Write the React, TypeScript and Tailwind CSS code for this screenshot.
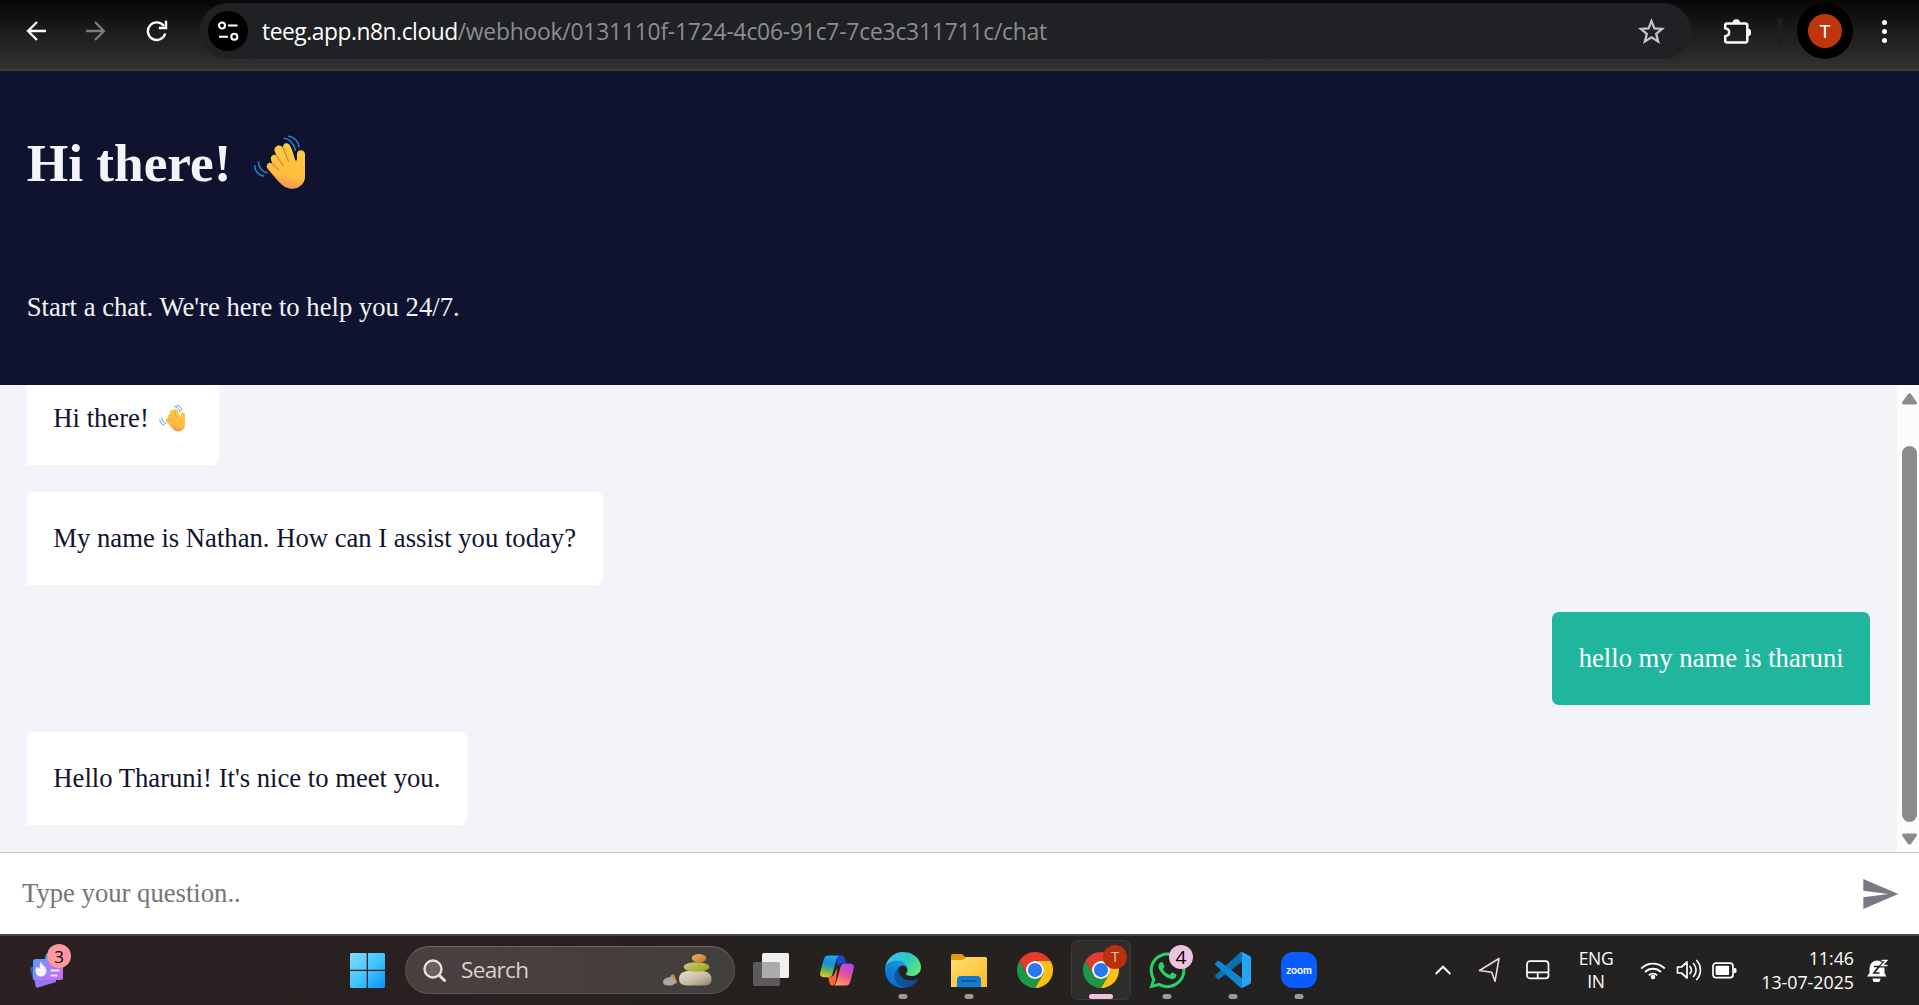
import React from "react";
import { FaWhatsapp } from "react-icons/fa";

const serif = "font-['Liberation_Serif',serif]";
const sans = "font-['Open_Sans','Noto_Sans',sans-serif]";

function WaveHand({ className }: { className: string }) {
  return (
    <svg viewBox="20 18 164 168" className={className} fill="none">
      <defs>
        <linearGradient id="skin" x1="0.6" y1="0" x2="0.4" y2="1">
          <stop offset="0" stopColor="#ffcc47" />
          <stop offset="0.7" stopColor="#ffbc3e" />
          <stop offset="1" stopColor="#f08f56" />
        </linearGradient>
      </defs>
      <g stroke="#1d84cf" strokeWidth="4.5" strokeLinecap="round">
        <path d="M114 31q18 4 27 20q5 8 6 16" />
        <path d="M127 25q14 2 22 12q8 9 9 20" />
        <path d="M36 101q1 16 11 25q7 7 16 8" />
        <path d="M25 113q0 13 8 21q7 8 19 10" />
      </g>
      <path
        d="M62 110C65 103 72 102 78 107L74 96C71 84 81 76 90 82L85 70C82 58 94 48 106 55L111 60C108 48 119 42 128 49C134 55 142 78 146 96L151 98C154 91 149 77 155 70C162 64 174 67 176 77V146C176 168 155 185 132 182C116 180 106 171 96 160L67 126C61 118 60 116 62 110Z"
        fill="url(#skin)"
      />
      <g stroke="#dc8a1f" strokeWidth="3.5" strokeLinecap="round">
        <path d="M78 107L96 124" />
        <path d="M90 82L110 112" />
        <path d="M111 60L127 101" />
        <path d="M146 97Q150 101 152 97" />
      </g>
    </svg>
  );
}

function BrowserBar() {
  return (
    <div className="flex h-[71px] shrink-0 items-start border-b-2 border-[#3b3b38] bg-linear-to-b from-[#070707] via-[#1c1c1c] via-45% to-[#313131] pt-[3px]">
      <div className="flex h-14 w-[200px] shrink-0 items-center gap-10 pl-[26px]">
        <svg className="size-5" viewBox="0 0 20 20" fill="none" stroke="#fff" strokeWidth="2.3">
          <path d="M20 10H1.5M11 1L2 10l9 9" />
        </svg>
        <svg className="size-5" viewBox="0 0 20 20" fill="none" stroke="#7b7b7b" strokeWidth="2.3">
          <path d="M0 10h18.5M9 1l9 9-9 9" />
        </svg>
        <svg className="size-[22px]" viewBox="0 0 22 22" fill="none" stroke="#fff" strokeWidth="2.4">
          <path d="M19.2 13.5A8.8 8.8 0 1 1 18 6.2" />
          <path d="M20 .8V8h-7.2" />
        </svg>
      </div>
      <div className="flex h-14 w-[1491px] items-center rounded-full bg-[#202124] pl-2">
        <div className="flex size-10 items-center justify-center rounded-full bg-black">
          <svg className="size-[22px]" viewBox="0 0 22 22" fill="none" stroke="#fff" strokeWidth="2.1">
            <circle cx="5" cy="5.5" r="3" />
            <path d="M11 5.5h9.5M2 16.8h9" />
            <circle cx="17.3" cy="16.8" r="3" />
          </svg>
        </div>
        <div className={`${sans} mt-[2px] ml-[14px] flex-1 whitespace-nowrap text-[22.8px] leading-8 text-[#8b8d90]`}>
          <span className="tracking-[-0.46px] text-white">teeg.app.n8n.cloud</span>
          <span className="tracking-[-0.19px]">/webhook/0131110f-1724-4c06-91c7-7ce3c311711c/chat</span>
        </div>
        <svg className="mr-[26px] size-[27px]" viewBox="0 0 26 26" fill="none" stroke="#c4c5c6" strokeWidth="2.2">
          <path d="M13 3l2.8 7 7.4.5-5.7 4.8 1.9 7.3L13 18.600l-6.400 4 1.900-7.300L2.800 10.500l7.400-.5z" />
        </svg>
      </div>
      <div className="flex h-14 flex-1 items-center">
        <svg className="ml-[32px] size-7" viewBox="0 0 28 28">
          <path
            d="M4 6.500H22.500A1.800 1.800 0 0 1 24.300 8.300V23.700A1.800 1.800 0 0 1 22.500 25.500H4A1.800 1.800 0 0 1 2.200 23.700V19.300Q6.200 18.500 6.200 15.200T2.200 11.200V8.300A1.800 1.800 0 0 1 4 6.500Z"
            fill="none"
            stroke="#fff"
            strokeWidth="2.5"
          />
          <path d="M9.500 6a3.800 3.800 0 0 1 7.600 0zM24.500 11.500a3.800 3.800 0 0 1 0 7.600z" fill="#fff" />
        </svg>
        <div className="ml-[27px] h-[27px] w-1 rounded bg-[#1d1d1d]" />
        <div className="ml-[15px] flex size-14 items-center justify-center rounded-full bg-black">
          <div className="flex size-[34px] items-center justify-center rounded-full bg-[#bf360c] font-['Roboto',sans-serif] text-[19px] leading-none text-white">
            T
          </div>
        </div>
        <div className="ml-[29px] flex flex-col gap-1">
          <i className="size-[5px] rounded-full bg-white" />
          <i className="size-[5px] rounded-full bg-white" />
          <i className="size-[5px] rounded-full bg-white" />
        </div>
      </div>
    </div>
  );
}

function Bubble({ children, user }: { children: React.ReactNode; user?: boolean }) {
  return (
    <div
      className={
        user
          ? "flex h-[93.330px] shrink-0 items-center self-end rounded-[6.670px] rounded-br-none bg-[#20b69e] px-[26.670px] pb-[2px] text-white"
          : "flex h-[93.330px] shrink-0 items-center self-start rounded-[6.670px] rounded-bl-none bg-white px-[26.670px] pb-[2px] text-[#101330]"
      }
    >
      {children}
    </div>
  );
}

function Chrome() {
  return (
    <svg className="size-9" viewBox="0 0 48 48">
      <path d="M24 12H44.780A24 24 0 0 0 3.220 12L13.610 30A12 12 0 0 1 24 12Z" fill="#e33b2e" />
      <path d="M34.390 30L24 48A24 24 0 0 0 44.780 12H24A12 12 0 0 1 34.390 30Z" fill="#fdc00f" />
      <path d="M13.610 30L3.220 12A24 24 0 0 0 24 48L34.390 30A12 12 0 0 1 13.610 30Z" fill="#1f9547" />
      <circle cx="24" cy="24" r="12" fill="#fff" />
      <circle cx="24" cy="24" r="9.500" fill="#2a78ea" />
    </svg>
  );
}

function Edge() {
  return (
    <svg className="size-9" viewBox="0 0 256 256">
      <defs>
        <linearGradient id="e1" x1="0" y1="0" x2="1" y2="0">
          <stop offset="0" stopColor="#0c59a4" />
          <stop offset="1" stopColor="#114a8b" />
        </linearGradient>
        <linearGradient id="e2" x1="0.600" y1="0" x2="0.300" y2="1">
          <stop offset="0" stopColor="#1b9de2" />
          <stop offset="0.400" stopColor="#1182d6" />
          <stop offset="1" stopColor="#0a6ac6" />
        </linearGradient>
        <linearGradient id="e3" x1="0" y1="0.200" x2="1" y2="0.800">
          <stop offset="0" stopColor="#35c1f1" />
          <stop offset="0.500" stopColor="#2fc6c5" />
          <stop offset="1" stopColor="#66eb6e" />
        </linearGradient>
      </defs>
      <path fill="url(#e1)" d="M231 190.500c-3.400 1.800-6.900 3.400-10.500 4.700a101.100 101.100 0 0 1-35.900 6.400c-47.300 0-88.500-32.500-88.500-74.300a31.500 31.500 0 0 1 16.400-27.300c-42.800 1.800-53.800 46.400-53.800 72.500 0 74 68.100 81.400 82.800 81.400 7.900 0 19.800-2.300 27-4.600l1.300-.4a128.300 128.300 0 0 0 66.600-52.800 4 4 0 0 0-5.400-5.600z" />
      <path fill="url(#e2)" d="M105.700 241.400a79.200 79.200 0 0 1-22.700-21.300 80.700 80.700 0 0 1 29.500-120c3.200-1.500 8.500-4.100 15.600-4a32.400 32.400 0 0 1 25.700 13 31.900 31.900 0 0 1 6.300 18.700c0-.2 24.500-79.600-80-79.600-43.900 0-80 41.600-80 78.200a130.200 130.200 0 0 0 12.100 56 128 128 0 0 0 156.400 67 75.500 75.500 0 0 1-62.800-8z" />
      <path fill="url(#e3)" d="M152.300 148.900c-.9 1-3.400 2.500-3.400 5.600 0 2.600 1.700 5.200 4.800 7.300 14.300 10 41.400 8.600 41.500 8.600a59.600 59.600 0 0 0 30.300-8.300 61.400 61.400 0 0 0 30.400-52.900c.3-22.400-8-37.300-11.300-43.900C223.500 23.900 177.700 0 128 0A128 128 0 0 0 0 126.200c.5-36.500 36.800-66 80-66 3.500 0 23.500.3 42 10 16.300 8.600 24.900 18.900 30.800 29.200 6.200 10.700 7.300 24.100 7.300 29.500 0 5.300-2.700 13.300-7.800 19.900z" />
    </svg>
  );
}

function Copilot() {
  return (
    <svg className="h-[31px] w-[34px]" viewBox="0 0 34 31">
      <defs>
        <linearGradient id="c1" x1="0.500" y1="0" x2="0.300" y2="1">
          <stop offset="0" stopColor="#22a7ee" />
          <stop offset="0.350" stopColor="#128fdc" />
          <stop offset="0.700" stopColor="#62b45c" />
          <stop offset="1" stopColor="#f4c70c" />
        </linearGradient>
        <linearGradient id="c2" x1="0.700" y1="0" x2="0.300" y2="1">
          <stop offset="0" stopColor="#a24df0" />
          <stop offset="0.500" stopColor="#ee5090" />
          <stop offset="1" stopColor="#ffa253" />
        </linearGradient>
      </defs>
      <path d="M16 .5h5c2.500 0 3.500 1.500 4.200 4l1 4h-3c-3 0-4.500 1.500-5.200 3.500z" fill="#1b48d0" />
      <path d="M8.500 22c4 0 5-1 6-3.500l3-6-1.500 12.500c-.5 3-1.500 5.500-3.500 5.500-2 0-3-2-3.500-4.500z" fill="#f9643c" />
      <path d="M8 .5h12c-2 0-3 2-3.700 4.500L12.500 19c-.8 2.300-2 3.300-4.500 3.300H4c-3 0-4.500-2-3.700-5L3.500 5C4.500 2 5.500.5 8 .5z" fill="url(#c1)" />
      <path d="M26 30.500H13c2 0 3-2 3.700-4.500L20.500 12c.8-2.300 2-3.600 4.500-3.600h5c3 0 4.500 2 3.700 5L30.500 26c-1 3-2 4.500-4.500 4.500z" fill="url(#c2)" />
    </svg>
  );
}

function Folder() {
  return (
    <svg className="size-9" viewBox="0 0 36 36">
      <defs>
        <linearGradient id="f1" x1="0" y1="0" x2="1" y2="1">
          <stop offset="0" stopColor="#ffdc75" />
          <stop offset="1" stopColor="#fbbd20" />
        </linearGradient>
        <linearGradient id="f2" x1="0" y1="0" x2="0" y2="1">
          <stop offset="0" stopColor="#0b78cf" />
          <stop offset="1" stopColor="#1181d8" />
        </linearGradient>
      </defs>
      <path d="M0 3.500A1.500 1.500 0 0 1 1.500 2H11l4 3.500V10H0z" fill="#dd9b07" />
      <path d="M0 8h11.500l4-3h19A1.500 1.500 0 0 1 36 6.500V35H0z" fill="url(#f1)" />
      <path d="M6 35v-7a4 4 0 0 1 4-4h16a4 4 0 0 1 4 4v7z" fill="url(#f2)" />
      <path d="M11 29h14" stroke="#07559c" strokeWidth="2" strokeLinecap="round" />
    </svg>
  );
}

function VSCode() {
  return (
    <svg className="size-9" viewBox="0 0 100 100">
      <path fill="#0a6fb4" d="M96.461 10.796L75.857.876a6.230 6.230 0 0 0-7.107 1.207L1.299 63.583a4.167 4.167 0 0 0 .004 6.162l5.510 5.009a4.167 4.167 0 0 0 5.320.236l81.228-61.620c2.725-2.067 6.639-.124 6.639 3.297v-.24a6.250 6.250 0 0 0-3.539-5.630z" />
      <path fill="#0e86d0" d="M96.461 89.204l-20.604 9.920a6.229 6.229 0 0 1-7.107-1.207L1.299 36.417a4.167 4.167 0 0 1 .004-6.162l5.510-5.009a4.167 4.167 0 0 1 5.320-.236l81.228 61.620c2.725 2.067 6.639.124 6.639-3.297v.24a6.250 6.250 0 0 1-3.539 5.630z" />
      <path fill="#27a5f2" d="M75.858 99.126a6.232 6.232 0 0 1-7.108-1.210c2.306 2.307 6.250.674 6.250-2.588V4.672c0-3.262-3.944-4.895-6.250-2.589a6.232 6.232 0 0 1 7.108-1.210l20.600 9.908A6.250 6.250 0 0 1 100 16.413v67.174a6.250 6.250 0 0 1-3.541 5.633z" />
    </svg>
  );
}

function Badge({ children, className }: { children: string; className: string }) {
  return (
    <span className={`absolute flex size-6 items-center justify-center rounded-full leading-none ${className}`}>{children}</span>
  );
}

function Slot({ children, state }: { children: React.ReactNode; state?: "open" | "active" }) {
  return (
    <div
      className={
        state === "active"
          ? "relative mx-[3px] mt-[4px] flex h-[60px] w-[60px] shrink-0 justify-center rounded-[7px] border border-[#3d3b3a] bg-[#2f2d2c] pt-[11px]"
          : "relative mt-[4px] flex h-[60px] w-[66px] shrink-0 justify-center pt-[12px]"
      }
    >
      {children}
      {state === "open" && <i className="absolute bottom-px left-1/2 h-[5px] w-[9px] -translate-x-1/2 rounded-full bg-[#999]" />}
      {state === "active" && <i className="absolute bottom-0 left-1/2 h-[5px] w-6 -translate-x-1/2 rounded-full bg-[#eec1e1]" />}
    </div>
  );
}

function Widgets() {
  return (
    <svg className="h-9 w-[34px]" viewBox="0 0 34 36">
      <defs>
        <linearGradient id="w1" x1="0" y1="0" x2="1" y2="0.600">
          <stop offset="0" stopColor="#4e9bff" />
          <stop offset="0.500" stopColor="#9b83fb" />
          <stop offset="1" stopColor="#c070f5" />
        </linearGradient>
      </defs>
      <path d="M14 10l2-8h6l6 10z" fill="#12b4d8" />
      <path d="M0 16l4-2 3 14H3z" fill="#1b6cc0" />
      <path d="M4 26h22v4L8 35.500a2 2 0 0 1-2.500-1.500z" fill="#9277f2" />
      <rect x="3" y="7" width="30" height="21" rx="2.500" fill="url(#w1)" />
      <path d="M11 9.500c0 3 5.500 5 5.500 9.500a5.500 5.500 0 0 1-11 0c0-2 .5-3.500 2-4.500 0 1.500.5 2 1.500 2 1.500-1.500 0-4.500 2-7z" fill="#f6f2fb" />
      <path d="M20.500 18.500h9M20.500 23.500h7" stroke="#f0e4ff" strokeWidth="2" />
    </svg>
  );
}

function Stones() {
  return (
    <svg className="h-8 w-[49px]" viewBox="0 0 49 32">
      <defs>
        <linearGradient id="s1" x1="0" y1="0" x2="1" y2="1">
          <stop offset="0" stopColor="#ebe3d3" />
          <stop offset="0.600" stopColor="#c1b69f" />
          <stop offset="1" stopColor="#8f8264" />
        </linearGradient>
        <linearGradient id="s2" x1="0" y1="0" x2="1" y2="0.700">
          <stop offset="0" stopColor="#cfca86" />
          <stop offset="1" stopColor="#a0a513" />
        </linearGradient>
        <linearGradient id="s3" x1="0" y1="0" x2="1" y2="1">
          <stop offset="0" stopColor="#f0b36b" />
          <stop offset="1" stopColor="#bf761f" />
        </linearGradient>
      </defs>
      <path d="M6 24l2-2.500q2-2.500 3.500 0L14 28q0 2-2 2z" fill="#cf8f3f" />
      <path d="M0 28q0-3 5-4.500 4-1 6 1.500t0 5q-1 1.500-5 1.500-6 0-6-3.500z" fill="#a6a7aa" />
      <path d="M16 25q0-7 8-8h17q7 1 7.500 8 0 6.500-6 6.500H24q-8 0-8-6.500z" fill="url(#s1)" />
      <ellipse cx="33.500" cy="13" rx="12.800" ry="4.800" fill="url(#s2)" />
      <ellipse cx="36" cy="4.300" rx="7.200" ry="4.200" fill="url(#s3)" />
    </svg>
  );
}

function Taskbar() {
  return (
    <div className={`${sans} flex h-[71px] shrink-0 items-start border-t-2 border-[#464444] bg-linear-to-r from-[#2c2022] via-[#24211f] via-45% to-[#232221]`}>
      <div className="relative mt-[16px] ml-[30px] w-[320px]">
        <Widgets />
        <Badge className="-top-[8px] left-[17px] bg-[#fd98a3] text-[17px] text-black">3</Badge>
      </div>
      <svg className="mt-[17px] size-[35px]" viewBox="0 0 35 35">
        <defs>
          <linearGradient id="win" gradientUnits="userSpaceOnUse" x1="0" y1="0" x2="35" y2="35">
            <stop offset="0" stopColor="#84dcfd" />
            <stop offset="0.500" stopColor="#44c5fd" />
            <stop offset="1" stopColor="#0693fc" />
          </linearGradient>
        </defs>
        <path d="M1 0H16.700V16.700H0V1zM18 0H34L35 1V16.700H18zM0 18H16.700V35H1L0 34zM18 18H35V34L34 35H18z" fill="url(#win)" />
      </svg>
      <div className="mt-[10px] ml-5 flex h-12 w-[330px] items-center rounded-full border border-[#5c5353] border-t-[#6d6463] bg-linear-to-r from-[#4d3f40] to-[#423f3d] pl-[17px]">
        <svg className="size-[23px]" viewBox="0 0 23 23" fill="none" stroke="#e4e1e1" strokeWidth="2.400" strokeLinecap="round">
          <circle cx="10" cy="10" r="8.500" fill="#6b5f60" />
          <path d="M16.200 16.200l5.300 5.300" strokeWidth="3" />
        </svg>
        <span className="ml-[15px] flex-1 text-[22.600px] leading-none tracking-[-0.7px] text-[#d5d1d1]">Search</span>
        <div className="mr-[22px]">
          <Stones />
        </div>
      </div>
      <div className="ml-[3px] flex">
        <Slot>
          <svg className="size-9" viewBox="0 0 36 36">
            <rect x="0" y="10" width="27" height="24" rx="2" fill="#5c5b5a" />
            <rect x="9" y="1" width="27" height="25" rx="1.500" fill="#f0f0f0" />
            <path d="M9 10h16a2 2 0 0 1 2 2v14H9z" fill="#acabab" />
          </svg>
        </Slot>
        <Slot>
          <div className="pt-[3px]">
            <Copilot />
          </div>
        </Slot>
        <Slot state="open">
          <Edge />
        </Slot>
        <Slot state="open">
          <Folder />
        </Slot>
        <Slot>
          <Chrome />
        </Slot>
        <Slot state="active">
          <Chrome />
          <Badge className="top-[4px] left-[31px] bg-[#bb310b] text-[14px] text-[#eac9c0]">T</Badge>
        </Slot>
        <Slot state="open">
          <FaWhatsapp className="-mt-[2px] size-[41px] text-[#27d366]" />
          <Badge className="top-[5px] left-[35px] bg-[#eec1e1] text-[19px] text-black">4</Badge>
        </Slot>
        <Slot state="open">
          <VSCode />
        </Slot>
        <Slot state="open">
          <div className="flex size-9 items-center justify-center rounded-[12px] bg-[#0b5cff] font-['Lato',sans-serif] text-[10.500px] leading-none font-bold text-white">
            zoom
          </div>
        </Slot>
      </div>
      <div className="mr-[30px] ml-auto flex h-[68px] items-center text-white">
        <svg className="h-[10px] w-4" viewBox="0 0 16 10" fill="none" stroke="#fff" strokeWidth="2">
          <path d="M.7 9L8 1.700 15.300 9" />
        </svg>
        <svg className="ml-[27px] h-[26px] w-[23px]" viewBox="0 0 23 26" fill="none" stroke="#f0d5e9" strokeWidth="1.600" strokeLinejoin="round">
          <path d="M21 1.500L1.500 13.500l12.200 1.800 3.300 9z" />
        </svg>
        <svg className="ml-[25px] h-[20px] w-6" viewBox="0 0 24 20" fill="none" stroke="#fff" strokeWidth="1.700">
          <rect x="1" y="1.200" width="21.500" height="17.200" rx="3" />
          <path d="M1 12.300h21.500M11.700 12.300v6" />
        </svg>
        <div className="ml-[28px] w-[36px] text-center text-[17.500px] leading-[23px] tracking-[-0.3px]">
          ENG
          <br />
          IN
        </div>
        <svg className="ml-[26px] h-[19px] w-[26px]" viewBox="0 0 26 19" fill="none" stroke="#fff" strokeWidth="1.800">
          <path d="M1.200 7.500a16.500 16.500 0 0 1 23.600 0M5 11a11.500 11.500 0 0 1 16 0M8.800 14.300a6 6 0 0 1 8.400 0" />
          <circle cx="13" cy="16" r="2.300" fill="#fff" stroke="none" />
        </svg>
        <svg className="ml-[10px] h-[22px] w-[26px]" viewBox="0 0 26 22" fill="none" stroke="#fff" strokeWidth="1.700" strokeLinejoin="round" strokeLinecap="round">
          <path d="M1.500 8h4L11 3v16l-5.500-5h-4zM14 7.500a5.500 5.500 0 0 1 0 7M17.500 4.500a9.500 9.500 0 0 1 0 13M20.700 1.500a14 14 0 0 1 0 19" />
        </svg>
        <svg className="ml-[10px] h-[17px] w-[25px]" viewBox="0 0 25 17">
          <rect x="1" y="1.200" width="20" height="14.500" rx="3" fill="none" stroke="#fff" strokeWidth="1.700" />
          <rect x="3.600" y="3.800" width="13.500" height="9.300" rx="1" fill="#fff" />
          <path d="M22 6h1a1.500 1.500 0 0 1 1.500 1.500v2a1.500 1.500 0 0 1-1.500 1.500h-1z" fill="#fff" />
        </svg>
        <div className="ml-[15px] w-[102px] text-right text-[17.800px] leading-[24px] whitespace-nowrap">
          11:46
          <br />
          13-07-2025
        </div>
        <svg className="ml-3 size-[23px]" viewBox="0 0 23 23">
          <path d="M1 17.500L3.500 14V9a7.500 7.500 0 0 1 15 0v5l2 3.500zM6.500 19.500h8a4 4 0 0 1-8 0z" fill="#fff" />
          <path d="M8 7.500h5l-5 6.500h5.500" fill="none" stroke="#232221" strokeWidth="1.700" />
          <path d="M15.500 1.500h5L16 6.500h5.500" fill="none" stroke="#232221" strokeWidth="4" />
          <path d="M15.500 1.500h5L16 6.500h5.500" fill="none" stroke="#fff" strokeWidth="1.700" />
        </svg>
      </div>
    </div>
  );
}

export default function App() {
  return (
    <div className={`${serif} flex h-[1005px] w-[1919px] flex-col overflow-hidden bg-white text-[26.670px] leading-[40px]`}>
      <BrowserBar />
      <header className="flex h-[314px] shrink-0 flex-col bg-[#101330] px-[26.670px] pt-[62px] text-[#f2f4f8]">
        <h1 className="flex h-[62px] items-center text-[53.330px] leading-none font-bold">
          Hi there!
          <WaveHand className="-mt-1 ml-[21px] h-[56px] w-[54.700px]" />
        </h1>
        <p className="mt-[92px]">Start a chat. We're here to help you 24/7.</p>
      </header>
      <main className="flex h-[467px] shrink-0 bg-[#f2f4f8]">
        <div className="flex flex-1 flex-col justify-end gap-[26.670px] overflow-hidden px-[26.670px] pb-[26.670px]">
          <Bubble>
            Hi there!
            <WaveHand className="mr-[6px] ml-[10px] h-[28px] w-[27.300px]" />
          </Bubble>
          <Bubble>My name is Nathan. How can I assist you today?</Bubble>
          <Bubble user>hello my name is tharuni</Bubble>
          <Bubble>Hello Tharuni! It's nice to meet you.</Bubble>
        </div>
        <div className="flex w-[22px] flex-col items-center bg-[#fcfcfc] pt-2 pl-[3px]">
          <svg className="h-3 w-[15px]" viewBox="0 0 15 12">
            <path d="M6 .9Q7.500-.6 9 .9L14.600 9Q15.600 11.500 13 11.500H2Q-.6 11.500.4 9z" fill="#8b8b8b" />
          </svg>
          <div className="mt-[41px] h-[376px] w-[15px] rounded-full bg-[#8b8b8b]" />
          <svg className="mt-[11px] h-3 w-[15px]" viewBox="0 0 15 12">
            <path d="M6 11.100Q7.500 12.600 9 11.100L14.600 3Q15.600.5 13 .5H2Q-.6.5.4 3z" fill="#8b8b8b" />
          </svg>
        </div>
      </main>
      <div className="flex h-[82px] shrink-0 items-center justify-between border-t border-[#c3c5cf] pr-[19px] pl-[22px]">
        <span className="-mt-[2px] text-[#757575]">Type your question..</span>
        <svg className="size-10" viewBox="0 0 24 24" fill="#777a83">
          <path d="M2 21L23 12L2 3v7l15 2l-15 2z" />
        </svg>
      </div>
      <Taskbar />
    </div>
  );
}
